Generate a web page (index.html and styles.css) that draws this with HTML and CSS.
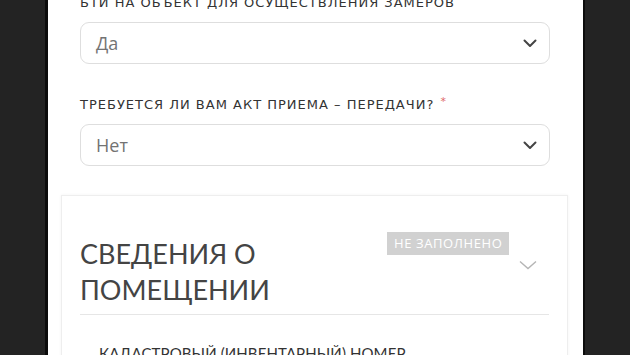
FILE: index.html
```html
<!DOCTYPE html>
<html lang="ru">
<head>
<meta charset="utf-8">
<link rel="stylesheet" href="styles.css">
</head>
<body>
<div class="screen">
  <div class="side side-left"></div>
  <main class="page">
    <div class="form">
      <div class="field field-first">
        <label class="label">БТИ НА ОБЪЕКТ ДЛЯ ОСУЩЕСТВЛЕНИЯ ЗАМЕРОВ <span class="req">*</span></label>
        <div class="select">
          <span class="value">Да</span>
          <svg class="chev" width="14" height="9" viewBox="0 0 14 9"><path d="M1.5 1.5 L7 7 L12.5 1.5" fill="none" stroke="#444" stroke-width="2" stroke-linecap="round" stroke-linejoin="round"/></svg>
        </div>
      </div>
      <div class="field">
        <label class="label">ТРЕБУЕТСЯ ЛИ ВАМ АКТ ПРИЕМА – ПЕРЕДАЧИ? <span class="req">*</span></label>
        <div class="select">
          <span class="value">Нет</span>
          <svg class="chev" width="14" height="9" viewBox="0 0 14 9"><path d="M1.5 1.5 L7 7 L12.5 1.5" fill="none" stroke="#444" stroke-width="2" stroke-linecap="round" stroke-linejoin="round"/></svg>
        </div>
      </div>
    </div>
    <section class="card">
      <div class="card-head">
        <h2 class="card-title">СВЕДЕНИЯ О ПОМЕЩЕНИИ</h2>
        <span class="badge">НЕ ЗАПОЛНЕНО</span>
        <svg class="card-chev" width="18" height="10" viewBox="0 0 18 10"><path d="M1 1.5 L9 8.5 L17 1.5" fill="none" stroke="#b5b5b5" stroke-width="1.4"/></svg>
      </div>
      <div class="divider"></div>
      <div class="sub-label">КАДАСТРОВЫЙ (ИНВЕНТАРНЫЙ) НОМЕР</div>
    </section>
  </main>
  <div class="side side-right"></div>
</div>
</body>
</html>
```

FILE: styles.css
```css
html, body {
  margin: 0;
  padding: 0;
  background: #232323;
  height: 100%;
  overflow: hidden;
}
.screen {
  display: flex;
  height: 355px;
  width: 630px;
}
.side {
  background: #232323;
}
.side-left {
  width: 45px;
  border-right: 3px solid #0c0c0c;
}
.side-right {
  flex: 1;
  border-left: 2px solid #0c0c0c;
}
.page {
  width: 535px;
  background: #ffffff;
  overflow: hidden;
  font-family: "DejaVu Sans", "Open Sans", sans-serif;
}
.form {
  padding: 0 33px 0 32px;
  margin-top: -9px;
}
.field {
  display: flex;
  flex-direction: column;
}
.field + .field {
  margin-top: 29px;
}
.label {
  font-size: 13px;
  line-height: 18px;
  color: #333;
  letter-spacing: 1px;
  margin-bottom: 10px;
  white-space: nowrap;
}
.req {
  color: #e06a6a;
  font-size: 11px;
  vertical-align: 4px;
  margin-left: 1px;
}
.select {
  height: 40px;
  border: 1px solid #dedede;
  border-radius: 9px;
  display: flex;
  align-items: center;
  justify-content: space-between;
  padding: 0 12px 0 15px;
}
.value {
  font-family: "Open Sans", sans-serif;
  font-size: 18px;
  color: #737373;
}
.chev {
  display: block;
}
.card {
  margin: 29px 15px 0 13px;
  border: 1px solid #eeeeee;
  border-bottom: none;
  box-shadow: 0 0 3px rgba(0,0,0,0.05);
  padding: 40px 18px 0 18px;
}
.card-head {
  display: flex;
  align-items: flex-start;
}
.card-title {
  margin: 0;
  width: 300px;
  font-family: Lato, "Open Sans", sans-serif;
  font-weight: 400;
  font-size: 27px;
  line-height: 36px;
  color: #444;
}
.badge {
  margin: -4px 0 0 7px;
  background: #d1d1d1;
  color: #fff;
  font-family: "Open Sans", sans-serif;
  font-size: 13px;
  line-height: 23px;
  padding: 0 7px;
  letter-spacing: 0.6px;
  white-space: nowrap;
}
.card-chev {
  display: block;
  margin: 24px 0 0 10px;
}
.divider {
  margin-top: 6px;
  height: 1px;
  background: #e6e6e6;
}
.sub-label {
  margin: 29px 0 0 19px;
  font-family: Lato, "Open Sans", sans-serif;
  font-size: 15px;
  line-height: 18px;
  color: #333;
  letter-spacing: 0.1px;
  white-space: nowrap;
}
```
